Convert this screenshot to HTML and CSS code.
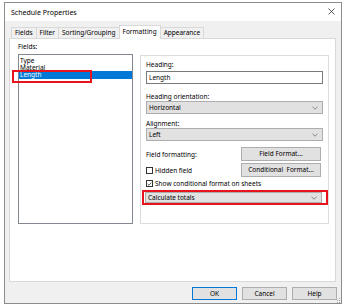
FILE: index.html
```html
<!DOCTYPE html>
<html lang="en">

<head>
	<meta charset="UTF-8">
	<meta name="viewport" content="width=device-width, initial-scale=1.0">
	<title>Schedule Properties</title>
	<link rel="stylesheet" href="styles.css">
</head>

<body>
	<div class="dialog">
		<div class="titlebar">
			<span class="title">Schedule Properties</span>
			<svg class="close" width="7" height="7" viewBox="0 0 7 7">
				<path d="M0.5 0.5 L6.5 6.5 M6.5 0.5 L0.5 6.5" stroke="#333" stroke-width="0.8" fill="none" />
			</svg>
		</div>

		<div class="tabs">
			<div class="tab">Fields</div>
			<div class="tab">Filter</div>
			<div class="tab">Sorting/Grouping</div>
			<div class="tab active">Formatting</div>
			<div class="tab">Appearance</div>
		</div>

		<div class="panel">
			<div class="fields-col">
				<div class="label">Fields:</div>
				<div class="listbox">
					<div class="item">Type</div>
					<div class="item">Material</div>
					<div class="item selected">Length</div>
				</div>
			</div>
			<div class="mark mark-length"></div>

			<div class="groupbox">
				<div class="label">Heading:</div>
				<div class="textbox">Length</div>

				<div class="label gap-lg">Heading orientation:</div>
				<div class="combo">
					<span>Horizontal</span>
					<svg class="chev" width="6" height="4" viewBox="0 0 6 4"><path d="M0.5 0.8 L3 3.2 L5.5 0.8" stroke="#707070" stroke-width="0.8" fill="none" /></svg>
				</div>

				<div class="label gap-sm">Alignment:</div>
				<div class="combo">
					<span>Left</span>
					<svg class="chev" width="6" height="4" viewBox="0 0 6 4"><path d="M0.5 0.8 L3 3.2 L5.5 0.8" stroke="#707070" stroke-width="0.8" fill="none" /></svg>
				</div>

				<div class="row row-first">
					<span>Field formatting:</span>
					<button class="btn">Field Format...</button>
				</div>
				<div class="row row-second">
					<label class="check"><span class="box"></span>Hidden field</label>
					<button class="btn">Conditional&nbsp; Format...</button>
				</div>
				<label class="check check-show">
					<span class="box">
						<svg width="6" height="6" viewBox="0 0 6 6"><path d="M0.8 3 L2.4 4.6 L5.2 1.2" stroke="#222" stroke-width="0.9" fill="none" /></svg>
					</span>Show conditional format on sheets
				</label>

				<div class="mark-wrap">
					<div class="combo combo-small">
						<span>Calculate totals</span>
						<svg class="chev" width="6" height="4" viewBox="0 0 6 4"><path d="M0.5 0.8 L3 3.2 L5.5 0.8" stroke="#707070" stroke-width="0.8" fill="none" /></svg>
					</div>
				</div>
			</div>
		</div>

		<div class="footer">
			<button class="btn btn-foot default">OK</button>
			<button class="btn btn-foot">Cancel</button>
			<button class="btn btn-foot">Help</button>
			<svg class="grip" width="5" height="5" viewBox="0 0 5 5">
				<rect x="3" y="0" width="1" height="1" fill="#a0a0a0" />
				<rect x="1" y="2" width="1" height="1" fill="#a0a0a0" />
				<rect x="3" y="2" width="1" height="1" fill="#a0a0a0" />
				<rect x="1" y="4" width="1" height="1" fill="#a0a0a0" />
				<rect x="3" y="4" width="1" height="1" fill="#a0a0a0" />
			</svg>
		</div>
	</div>
</body>

</html>
```

FILE: styles.css
```css
body {
	margin: 0;
	background-color: #fff;
	font-family: 'Noto Sans', 'Open Sans', sans-serif;
	font-size: 6.5px;
	color: #000;
}

.dialog {
	width: 338px;
	height: 302px;
	box-sizing: border-box;
	margin: 2px 0 0 4px;
	border: 1px solid #8c8c8c;
	background-color: #f0f0f0;
	display: flex;
	flex-direction: column;
}

.titlebar {
	height: 18px;
	background-color: #fff;
	display: flex;
	align-items: center;
	justify-content: space-between;
	padding: 0 6px 0 6px;
}

.title {
	font-size: 7px;
}

.close {
	margin-top: -1px;
}

.tabs {
	height: 17px;
	display: flex;
	align-items: flex-end;
	padding-left: 6px;
}

.tab {
	height: 11px;
	box-sizing: border-box;
	line-height: 10px;
	padding: 0 3px;
	border: 1px solid #d9d9d9;
	border-bottom: none;
	margin-right: -1px;
	background-color: #f0f0f0;
}

.tab.active {
	height: 14px;
	line-height: 12px;
	margin-bottom: -1px;
	background-color: #fff;
	position: relative;
	z-index: 1;
}

.panel {
	height: 244px;
	box-sizing: border-box;
	margin: 0 5px 0 4px;
	border: 1px solid #d9d9d9;
	background-color: #fff;
	display: flex;
	align-items: flex-start;
	padding: 3px 0 0 8px;
	position: relative;
}

.fields-col {
	width: 115px;
}

.label {
	line-height: 9px;
	height: 9px;
}

.fields-col .label {
	line-height: 10px;
	height: 10px;
	margin-bottom: 2px;
}

.listbox {
	height: 170px;
	box-sizing: border-box;
	border: 1px solid #828790;
	padding-top: 2px;
}

.item {
	height: 7px;
	line-height: 7px;
	padding-left: 1px;
}

.item.selected {
	height: 8px;
	line-height: 8px;
	background-color: #0078d7;
	color: #fff;
}

.mark {
	position: absolute;
	border: 2px solid #e8141b;
}

.mark-length {
	left: 2px;
	top: 31px;
	width: 76px;
	height: 9px;
}

.groupbox {
	width: 189px;
	height: 169px;
	box-sizing: border-box;
	margin: 13px 0 0 7px;
	border: 1px solid #dcdcdc;
	padding: 4px 5px 0 5px;
}

.textbox {
	height: 13px;
	box-sizing: border-box;
	margin-top: 2px;
	border: 1px solid #7a7a7a;
	line-height: 11px;
	padding-left: 2px;
}

.gap-lg {
	margin-top: 8px;
}

.gap-sm {
	margin-top: 5px;
}

.combo {
	height: 13px;
	box-sizing: border-box;
	border: 1px solid #adadad;
	background-color: #e1e1e1;
	display: flex;
	align-items: center;
	justify-content: space-between;
	padding: 0 4px 0 2px;
}

.combo-small {
	height: 11px;
}

.row {
	display: flex;
	align-items: center;
	justify-content: space-between;
	padding-right: 2px;
}

.row-first {
	margin-top: 6px;
}

.row-second {
	margin-top: 2px;
}

.btn {
	width: 80px;
	height: 14px;
	box-sizing: border-box;
	border: 1px solid #adadad;
	background-color: #e1e1e1;
	font-family: inherit;
	font-size: inherit;
	color: #000;
	padding: 0;
	line-height: 12px;
}

.check {
	display: flex;
	align-items: center;
	gap: 2px;
}

.box {
	width: 7px;
	height: 7px;
	box-sizing: border-box;
	border: 1px solid #333;
	background-color: #fff;
	display: flex;
	align-items: center;
	justify-content: center;
}

.check-show {
	height: 11px;
	margin-top: 1px;
}

.mark-wrap {
	margin: 1px -5px 0 -4px;
	border: 2px solid #e8141b;
	padding: 0 4px 0 1px;
}

.footer {
	flex: 1;
	display: flex;
	justify-content: flex-end;
	align-items: flex-start;
	gap: 5px;
	padding: 5px 4px 0 0;
	position: relative;
}

.btn-foot {
	width: 45px;
	height: 13px;
}

.btn-foot.default {
	border-color: #0078d7;
}

.grip {
	position: absolute;
	right: 0;
	bottom: 0;
}
```
